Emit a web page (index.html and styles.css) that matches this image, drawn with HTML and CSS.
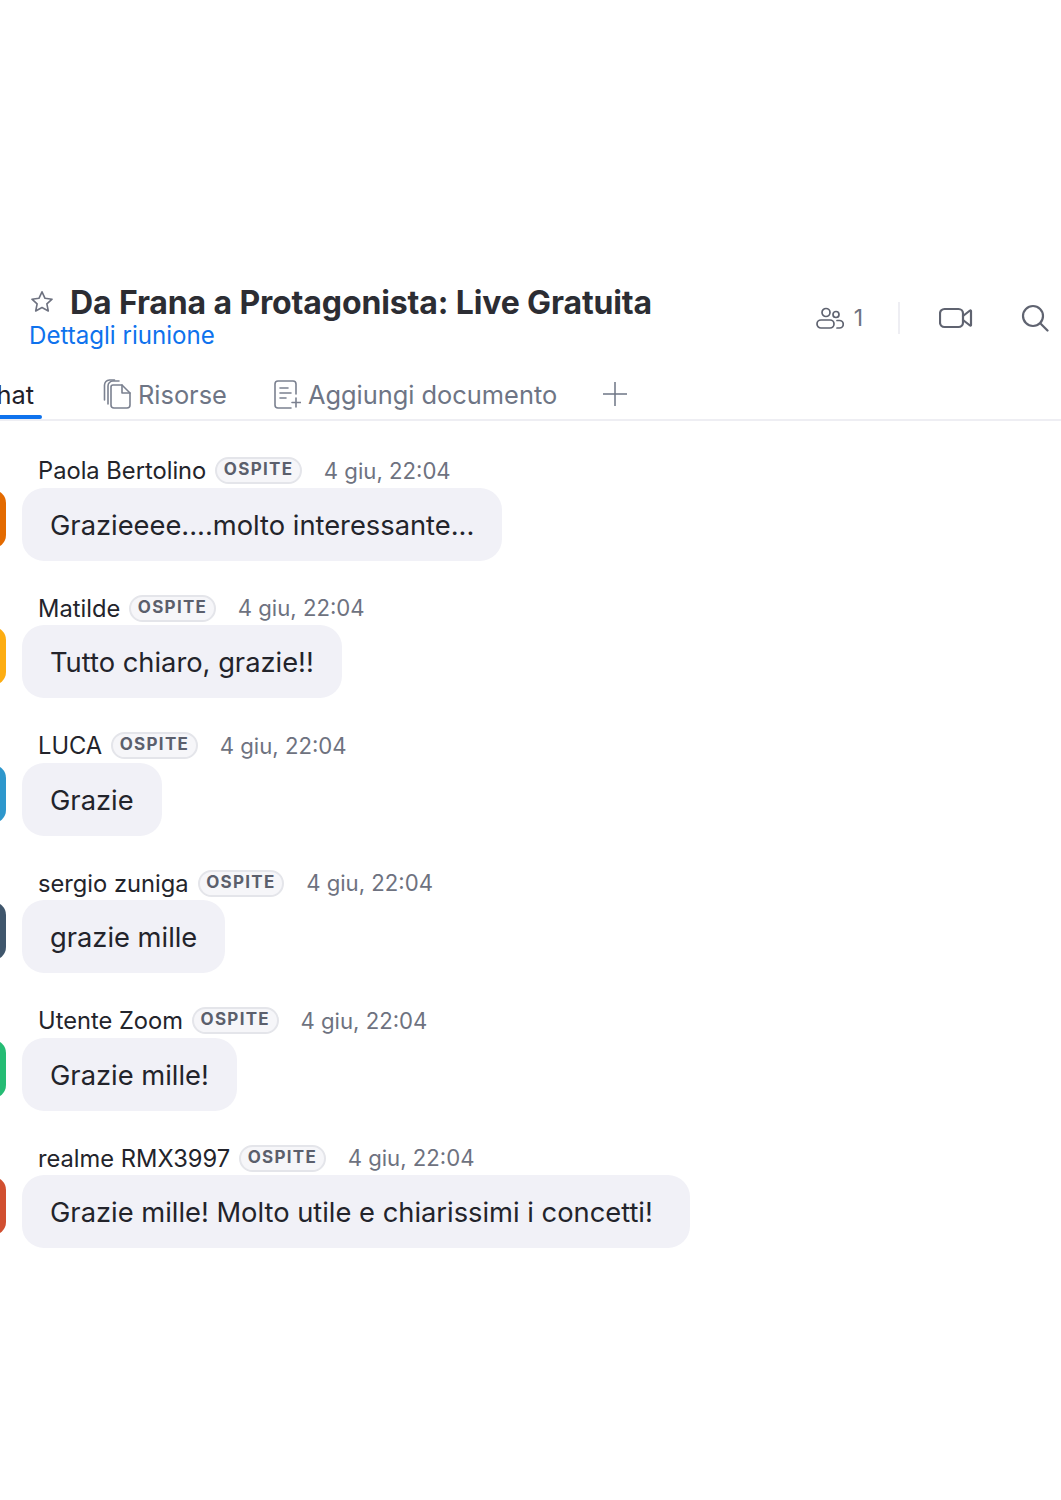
FILE: index.html
```html
<!DOCTYPE html>
<html lang="it">
<head>
<meta charset="UTF-8">
<title>Da Frana a Protagonista: Live Gratuita</title>
<link rel="stylesheet" href="styles.css">
</head>
<body>

<div class="page">
  <div class="header">
    <div class="title-block">
      <div class="title-row">
        <svg class="star" viewBox="0 0 24 24" width="26" height="26"><path d="M12 2.6l2.8 6 6.5.8-4.8 4.4 1.300 6.500L12 17.100l-5.800 3.200 1.300-6.500-4.800-4.400 6.500-.8z"/></svg>
        <h1>Da Frana a Protagonista: Live Gratuita</h1>
      </div>
      <a class="details" href="#">Dettagli riunione</a>
    </div>
    <div class="actions">
      <svg class="icon" viewBox="0 0 28 24" width="28" height="24"><circle cx="10" cy="6.500" r="4"/><circle cx="20" cy="8.500" r="3"/><rect x="1" y="14" width="17" height="8" rx="4"/><path d="M21 14.500h2.500a3.700 3.700 0 0 1 0 7.500H21"/></svg>
      <span class="count">1</span>
      <span class="sep"></span>
      <svg class="icon video" viewBox="0 0 34 22" width="34" height="22"><rect x="1" y="2" width="23" height="18" rx="4.500"/><path d="M24 9l7-5.500a.6.6 0 0 1 1 .5v14a.6.6 0 0 1-1 .5L24 13"/></svg>
      <svg class="icon search" viewBox="0 0 28 28" width="28" height="28"><circle cx="12" cy="12" r="10"/><path d="M19.500 19.500l7 7"/></svg>
    </div>
  </div>

  <div class="tabs">
    <div class="tab active">Chat</div>
    <div class="tab">
      <svg class="tab-icon" viewBox="0 0 28 30" width="28" height="30"><path d="M11 6H10a2 2 0 0 0-2 2v18a3 3 0 0 0 3 3h13a3 3 0 0 0 3-3V14l-8-8z"/><path d="M19 6v8h8"/><path d="M5 25V7a5 5 0 0 1 5-5h6"/><path d="M1.500 21V6a5.500 5.500 0 0 1 5-5h5"/></svg>
      Risorse
    </div>
    <div class="tab">
      <svg class="tab-icon" viewBox="0 0 28 30" width="28" height="30"><path d="M23 15V5a3 3 0 0 0-3-3H5a3 3 0 0 0-3 3v21a3 3 0 0 0 3 3h13"/><path d="M7 9h8M7 14h11M7 19h6M23 19v9M19 23.500h9"/></svg>
      Aggiungi documento
    </div>
    <svg class="plus" viewBox="0 0 24 24" width="24" height="24"><path d="M12 0v24M0 12h24"/></svg>
  </div>

  <div class="messages">
    <div class="msg">
      <div class="avatar orange"></div>
      <div class="msg-body">
        <div class="meta"><span class="name">Paola Bertolino</span><span class="badge">OSPITE</span><span class="time">4 giu, 22:04</span></div>
        <div class="bubble">Grazieeee....molto interessante...</div>
      </div>
    </div>
    <div class="msg">
      <div class="avatar yellow"></div>
      <div class="msg-body">
        <div class="meta"><span class="name">Matilde</span><span class="badge">OSPITE</span><span class="time">4 giu, 22:04</span></div>
        <div class="bubble">Tutto chiaro, grazie!!</div>
      </div>
    </div>
    <div class="msg">
      <div class="avatar blue"></div>
      <div class="msg-body">
        <div class="meta"><span class="name">LUCA</span><span class="badge">OSPITE</span><span class="time">4 giu, 22:04</span></div>
        <div class="bubble">Grazie</div>
      </div>
    </div>
    <div class="msg">
      <div class="avatar slate"></div>
      <div class="msg-body">
        <div class="meta"><span class="name">sergio zuniga</span><span class="badge">OSPITE</span><span class="time">4 giu, 22:04</span></div>
        <div class="bubble">grazie mille</div>
      </div>
    </div>
    <div class="msg">
      <div class="avatar green"></div>
      <div class="msg-body">
        <div class="meta"><span class="name">Utente Zoom</span><span class="badge">OSPITE</span><span class="time">4 giu, 22:04</span></div>
        <div class="bubble">Grazie mille!</div>
      </div>
    </div>
    <div class="msg">
      <div class="avatar red"></div>
      <div class="msg-body">
        <div class="meta"><span class="name">realme RMX3997</span><span class="badge">OSPITE</span><span class="time">4 giu, 22:04</span></div>
        <div class="bubble long">Grazie mille! Molto utile e chiarissimi i concetti!</div>
      </div>
    </div>
  </div>
</div>

</body>
</html>
```

FILE: styles.css
```css
* {
  box-sizing: border-box;
  font-family: 'Inter', 'Liberation Sans', sans-serif;
}

html, body {
  margin: 0;
  background: #fff;
  overflow: hidden;
}

.page {
  width: 1061px;
  height: 1500px;
  padding-top: 284px;
  overflow: hidden;
}

/* header */
.header {
  display: flex;
  justify-content: space-between;
  height: 66px;
  padding: 0 12px 0 29px;
}

.title-row {
  display: flex;
  align-items: center;
  gap: 15px;
  height: 36px;
}

.star {
  fill: none;
  stroke: #6e7280;
  stroke-width: 1.500;
  stroke-linejoin: round;
}

h1 {
  margin: 0;
  font-size: 32px;
  font-weight: 700;
  letter-spacing: -0.13px;
  color: #2c2d33;
}

.details {
  display: block;
  font-size: 24.100px;
  line-height: 32px;
  color: #0e72ed;
  text-decoration: none;
}

.actions {
  display: flex;
  align-items: center;
  height: 66px;
  padding-top: 2px;
}

.icon {
  fill: none;
  stroke: #5f6370;
  stroke-width: 1.700;
  stroke-linecap: round;
  stroke-linejoin: round;
}

.video, .search {
  stroke-width: 2.200;
}

.count {
  margin-left: 10px;
  font-size: 23px;
  color: #6e7280;
}

.sep {
  width: 2px;
  height: 32px;
  margin: 0 39px 0 35px;
  background: #eeeef3;
}

.search {
  margin-left: 48px;
}

/* tabs */
.tabs {
  display: flex;
  align-items: center;
  gap: 46px;
  height: 71px;
  margin-left: -22px;
  padding-top: 19px;
  border-bottom: 2px solid #eeeef3;
}

.tab {
  display: flex;
  align-items: center;
  gap: 7px;
  font-size: 25.400px;
  color: #6e7585;
}

.tab.active {
  position: relative;
  width: 64px;
  margin-right: 15px;
  color: #1f2029;
}

.tab.active::after {
  content: "";
  position: absolute;
  left: 0;
  right: 0;
  bottom: -9px;
  height: 4px;
  border-radius: 2px;
  background: #0e72ed;
}

.tab-icon {
  fill: none;
  stroke: #7b8190;
  stroke-width: 1.600;
  stroke-linecap: round;
  stroke-linejoin: round;
}

.plus {
  fill: none;
  stroke: #6e7585;
  stroke-width: 1.500;
}

/* messages */
.messages {
  display: flex;
  flex-direction: column;
  gap: 32.500px;
  padding-top: 34.500px;
}

.msg {
  display: flex;
  align-items: flex-end;
  gap: 16px;
  margin-left: -52px;
}

.avatar {
  flex: none;
  width: 58px;
  height: 58px;
  margin-bottom: 13px;
  border-radius: 13px;
}

.orange { background: #e36a00; }
.yellow { background: #fdad12; }
.blue { background: #2e97cc; }
.slate { background: #3f566c; }
.green { background: #25bc74; }
.red { background: #d14f30; }

.meta {
  display: flex;
  align-items: center;
  height: 30px;
  padding-left: 16px;
  margin-bottom: 2px;
}

.name {
  font-size: 23.700px;
  color: #23242b;
}

.badge {
  margin-left: 9px;
  padding: 0 6.500px;
  height: 27px;
  line-height: 21px;
  border: 2px solid #e4e5ea;
  border-radius: 14px;
  background: #f6f6f9;
  font-size: 17px;
  font-weight: 700;
  letter-spacing: 1.300px;
  color: #5b5f6c;
}

.time {
  margin-left: 22px;
  font-size: 22.150px;
  color: #6e7280;
}

.bubble {
  width: fit-content;
  height: 73px;
  padding: 0 28px;
  line-height: 75px;
  border-radius: 22px;
  background: #f1f1f7;
  font-size: 27.300px;
  color: #23242b;
}

.bubble.long {
  padding-right: 37px;
}
```
